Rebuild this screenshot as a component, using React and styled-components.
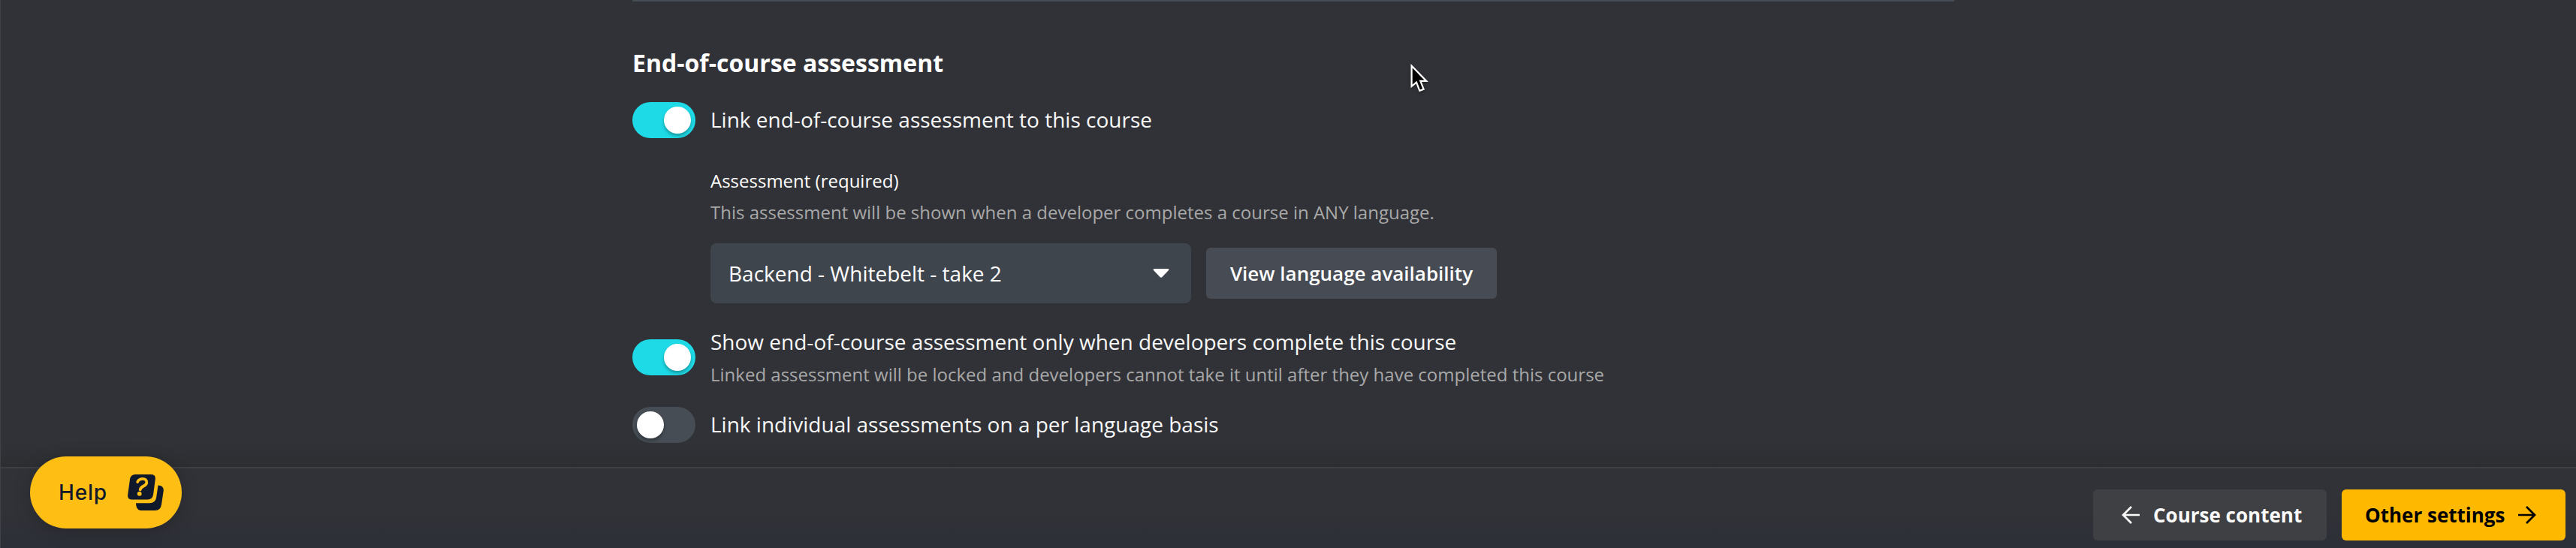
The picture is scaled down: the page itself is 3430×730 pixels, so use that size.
import styled, { createGlobalStyle } from "styled-components";

const GlobalStyle = createGlobalStyle`
  * {
    box-sizing: border-box;
  }
  body {
    margin: 0;
    background-color: #313237;
    font-family: "Open Sans", "Noto Sans", sans-serif;
    color: #fff;
  }
  button {
    font-family: inherit;
    border: 0;
    cursor: pointer;
  }
`;

const Page = styled.div`
  position: relative;
  display: flex;
  flex-direction: column;
  height: 730px;
  overflow: hidden;
  border-left: 1px solid #414247;
`;

const Content = styled.main`
  flex: 1;
  min-height: 0;
  padding-left: 841px;
  background: linear-gradient(to bottom, #313237 592px, #2d2e32 622px);
`;

const Section = styled.section`
  width: 1760px;
  border-top: 2px solid #464d55;
`;

const Title = styled.h2`
  margin: 0;
  padding-top: 60px;
  font-size: 32px;
  line-height: 44px;
  font-weight: 700;
`;

const ToggleRow = styled.label`
  display: flex;
  align-items: center;
  gap: 20px;
  height: ${(props) => props.$height}px;
  margin-top: ${(props) => props.$top}px;
`;

const Switch = styled.span`
  display: flex;
  flex-shrink: 0;
  justify-content: ${(props) => (props.$on ? "flex-end" : "flex-start")};
  width: 84px;
  height: 48px;
  padding: 6px;
  border-radius: 24px;
  background-color: ${(props) => (props.$on ? "#1edae6" : "#464d55")};
`;

const Knob = styled.span`
  width: 36px;
  height: 36px;
  border-radius: 50%;
  background-color: #fff;
  box-shadow: 0 3px 4px rgba(0, 0, 0, 0.3);
`;

const Texts = styled.div`
  display: flex;
  flex-direction: column;
  gap: 1px;
  padding: ${(props) => (props.$hasHint ? "1px 0 0" : "0 0 2px")};
`;

const Label = styled.span`
  font-size: 28px;
  line-height: 44px;
  color: #f8f8f8;
  white-space: nowrap;
`;

const Hint = styled.span`
  font-size: 24px;
  line-height: 42px;
  color: #a8a8a8;
  white-space: nowrap;
`;

const Field = styled.div`
  display: flex;
  flex-direction: column;
  padding: 37px 0 0 104px;
`;

const FieldName = styled.span`
  margin-bottom: 1px;
  font-size: 24px;
  line-height: 40px;
`;

const FieldRow = styled.div`
  display: flex;
  align-items: center;
  gap: 20px;
  margin-top: 20px;
`;

const Select = styled.div`
  display: flex;
  align-items: center;
  justify-content: space-between;
  width: 640px;
  height: 80px;
  padding: 0 29px 0 24px;
  border-radius: 8px;
  background-color: #3f454d;
  font-size: 28px;
`;

const Button = styled.button`
  display: flex;
  align-items: center;
  justify-content: center;
  width: 387px;
  height: 68px;
  padding: 0;
  border-radius: 6px;
  background-color: #474b53;
  color: #fff;
  font-size: 26px;
  font-weight: 600;
  white-space: nowrap;
`;

const NavButton = styled(Button)`
  justify-content: flex-start;
  gap: 10px;
  width: ${(props) => (props.$primary ? 298 : 311)}px;
  padding: 0 0 0 ${(props) => (props.$primary ? 31 : 30)}px;
  background-color: ${(props) => (props.$primary ? "#ffb800" : "#3f4043")};
  color: ${(props) => (props.$primary ? "#000" : "#fafafa")};
  font-weight: 700;
`;

const Footer = styled.footer`
  display: flex;
  justify-content: flex-end;
  gap: 20px;
  height: 108px;
  padding: 28px 14px 0 0;
  border-top: 2px solid #3e3f44;
  background: linear-gradient(to bottom, #313237 50%, #2d2f38);
`;

const HelpButton = styled.button`
  position: absolute;
  left: 39px;
  bottom: 26px;
  display: flex;
  align-items: center;
  justify-content: space-between;
  width: 202px;
  height: 96px;
  padding: 0 24px 0 38px;
  border-radius: 48px;
  background-color: #ffbe14;
  box-shadow: 0 4px 24px rgba(0, 0, 0, 0.2);
  color: #10182b;

  span {
    font-family: Inter, sans-serif;
    font-size: 28px;
    font-weight: 500;
    letter-spacing: 0.8px;
  }
`;

const Pointer = styled.svg`
  position: absolute;
  left: 1877px;
  top: 85px;
  filter: drop-shadow(0 2px 2px rgba(0, 0, 0, 0.3));
`;

const Arrow = ({ left }) => (
  <svg width="40" height="24" viewBox="-8 0 40 24" fill="none" stroke="currentColor" strokeWidth="2.7">
    <path d={left ? "M24 12H2M13 1L2 12l11 11" : "M0 12h22M11 1l11 11-11 11"} />
  </svg>
);

const HelpIcon = () => (
  <svg width="48" height="48" viewBox="0 0 48 48" fill="none">
    <path
      d="M10 0H31Q37.500 0 36.800 6.500L34 27Q32.800 33.500 26.500 33.500H6Q-.5 33.500 .2 27L3 6.500Q4 0 10 0Z"
      fill="currentColor"
    />
    <path
      d="M40.500 14.500Q48.600 15 47.700 22L45 40Q43.800 48 36.500 48H17.500Q11 47.500 11 38.300H29Q37 38 38.200 30.500Z"
      fill="currentColor"
    />
    <path
      d="M13.200 10C15 4.500 26 4 25.300 11C24.800 16 17.500 15 16.700 20.300"
      stroke="#ffbe14"
      strokeWidth="3.800"
      strokeLinecap="round"
    />
    <circle cx="15.700" cy="25.700" r="2.900" fill="#ffbe14" />
  </svg>
);

const Toggle = ({ on, label, hint, height, top }) => (
  <ToggleRow $height={height} $top={top}>
    <Switch $on={on}>
      <Knob />
    </Switch>
    <Texts $hasHint={Boolean(hint)}>
      <Label>{label}</Label>
      {hint && <Hint>{hint}</Hint>}
    </Texts>
  </ToggleRow>
);

const App = () => {
  return (
    <>
      <GlobalStyle />
      <Page>
        <Content>
          <Section>
            <Title>End-of-course assessment</Title>
            <Toggle on label="Link end-of-course assessment to this course" height={48} top={30} />
            <Field>
              <FieldName>Assessment (required)</FieldName>
              <Hint>This assessment will be shown when a developer completes a course in ANY language.</Hint>
              <FieldRow>
                <Select>
                  Backend - Whitebelt - take 2
                  <svg width="22" height="12" viewBox="0 0 22 12" fill="#fff">
                    <path d="M2 0h18q2 0 1 2l-8.500 9q-1.500 1.500-3 0L1 2q-1-2 1-2z" />
                  </svg>
                </Select>
                <Button>View language availability</Button>
              </FieldRow>
            </Field>
            <Toggle
              on
              label="Show end-of-course assessment only when developers complete this course"
              hint="Linked assessment will be locked and developers cannot take it until after they have completed this course"
              height={88}
              top={28}
            />
            <Toggle label="Link individual assessments on a per language basis" height={48} top={22} />
          </Section>
        </Content>
        <Footer>
          <NavButton>
            <Arrow left />
            Course content
          </NavButton>
          <NavButton $primary>
            Other settings
            <Arrow />
          </NavButton>
        </Footer>
        <HelpButton>
          <span>Help</span>
          <HelpIcon />
        </HelpButton>
        <Pointer width="26" height="39" viewBox="0 0 26 39">
          <path d="M1.600 2.800V30L8 24.600l4.300 11.200 5.300-1.900-4.300-11h8z" fill="#000" stroke="#fff" strokeWidth="2.200" />
        </Pointer>
      </Page>
    </>
  );
};

export default App;
